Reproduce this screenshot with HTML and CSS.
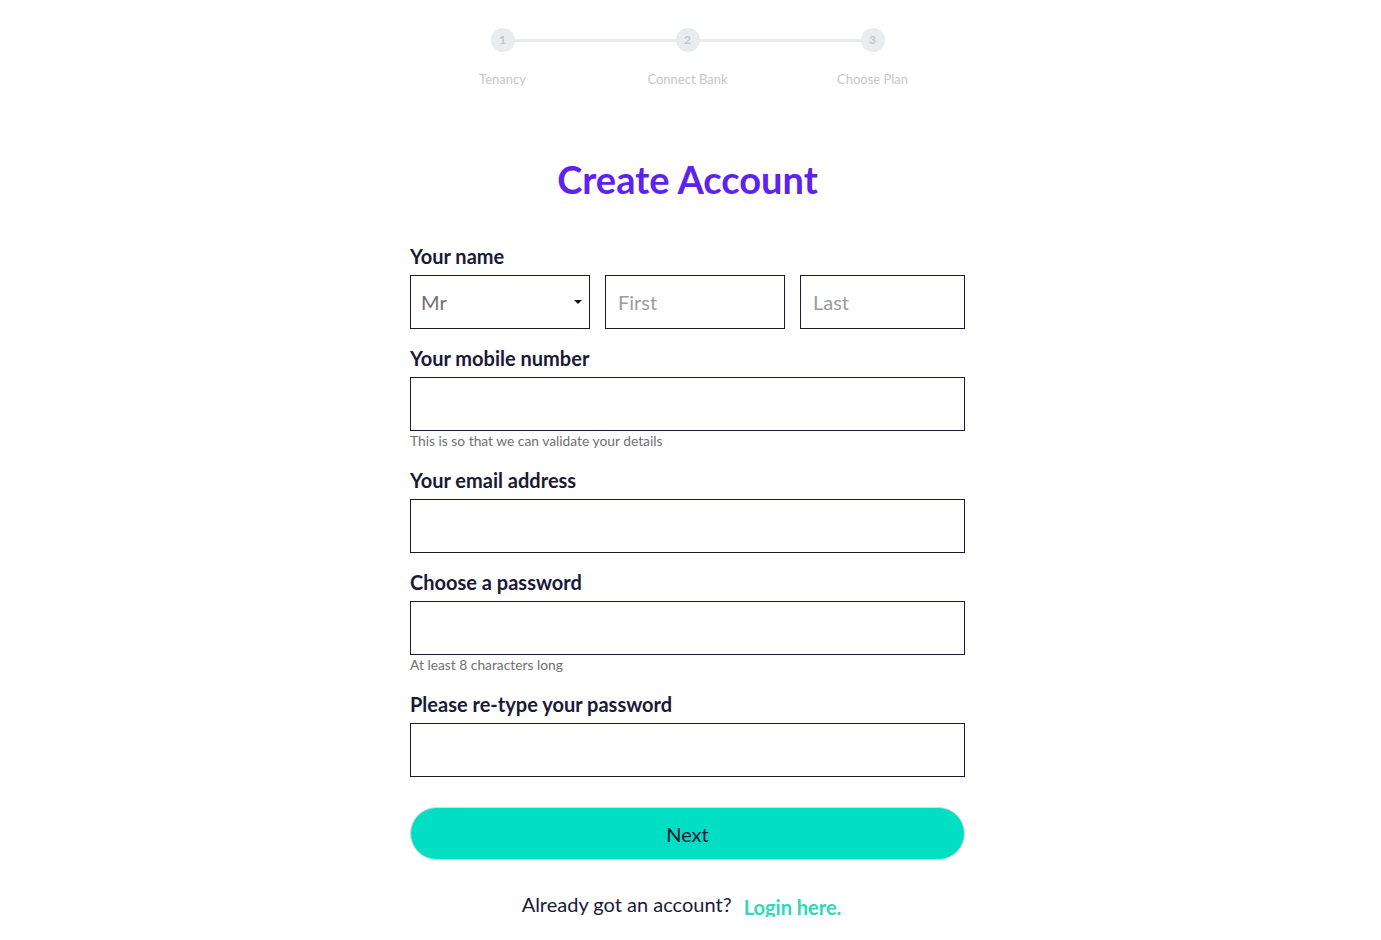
FILE: index.html
```html
<!DOCTYPE html>
<html lang="en">
<head>
<meta charset="utf-8">
<title>Create Account</title>
<link rel="stylesheet" href="styles.css">
</head>
<body>
<div class="page">
  <ol class="stepper">
    <li class="step"><span class="dot">1</span><span class="step-label">Tenancy</span></li>
    <li class="step"><span class="dot">2</span><span class="step-label">Connect Bank</span></li>
    <li class="step"><span class="dot">3</span><span class="step-label">Choose Plan</span></li>
  </ol>

  <h1 class="title">Create Account</h1>

  <form class="form">
    <div class="field">
      <label class="label">Your name</label>
      <div class="name-row">
        <div class="select-wrap">
          <select class="input select">
            <option>Mr</option>
            <option>Mrs</option>
            <option>Ms</option>
          </select>
        </div>
        <input class="input" type="text" placeholder="First">
        <input class="input" type="text" placeholder="Last">
      </div>
    </div>

    <div class="field">
      <label class="label">Your mobile number</label>
      <input class="input" type="tel">
      <p class="help">This is so that we can validate your details</p>
    </div>

    <div class="field">
      <label class="label">Your email address</label>
      <input class="input" type="email">
    </div>

    <div class="field">
      <label class="label">Choose a password</label>
      <input class="input" type="password">
      <p class="help">At least 8 characters long</p>
    </div>

    <div class="field">
      <label class="label">Please re-type your password</label>
      <input class="input" type="password">
    </div>

    <button class="next" type="button">Next</button>

    <p class="login">Already got an account? <a class="login-link" href="#">Login here.</a></p>
  </form>
</div>
</body>
</html>
```

FILE: styles.css
```css
* { box-sizing: border-box; }

html, body {
  margin: 0;
  padding: 0;
  background: #ffffff;
  font-family: "Lato", "Open Sans", "Liberation Sans", sans-serif;
  color: #1a1937;
}

body {
  padding-right: 6px;
}

.page {
  width: 555px;
  margin: 0 auto;
  padding-top: 28px;
}

/* Stepper */
.stepper {
  list-style: none;
  margin: 0;
  padding: 0;
  display: grid;
  grid-template-columns: repeat(3, 1fr);
}

.step {
  position: relative;
  display: flex;
  flex-direction: column;
  align-items: center;
}

.step:not(:first-child)::before {
  content: "";
  position: absolute;
  top: 11px;
  left: -50%;
  right: 50%;
  height: 3px;
  background: #e9ecef;
  z-index: 0;
}

.dot {
  position: relative;
  z-index: 1;
  width: 24px;
  height: 24px;
  border-radius: 50%;
  background: #e9ecef;
  color: #c3c6ca;
  font-size: 12px;
  font-weight: 700;
  line-height: 24px;
  text-align: center;
}

.step-label {
  margin-top: 19px;
  font-size: 13px;
  line-height: 16px;
  color: #c7c7c7;
}

/* Title */
.title {
  margin: 69px 0 0;
  text-align: center;
  font-size: 38px;
  line-height: 46px;
  font-weight: 700;
  color: #5d22ef;
}

/* Form */
.form {
  margin-top: 42px;
}

.field {
  margin-bottom: 17px;
}

.label {
  display: block;
  font-size: 20px;
  line-height: 24px;
  font-weight: 700;
  color: #1a1937;
  margin-bottom: 7px;
}

.name-row {
  display: grid;
  grid-template-columns: 180px 180px 1fr;
  column-gap: 15px;
}

.input {
  display: block;
  width: 100%;
  height: 54px;
  margin: 0;
  border: 1px solid #1b1a3c;
  border-radius: 0;
  background: #ffffff;
  padding: 0 12px;
  font-family: inherit;
  font-size: 20px;
  color: #1a1937;
  outline: none;
}

.input::placeholder {
  color: #9b9b9b;
}

.select-wrap {
  position: relative;
}

.select {
  -webkit-appearance: none;
  appearance: none;
  color: #707070;
  padding-left: 10px;
}

.select-wrap::after {
  content: "";
  position: absolute;
  right: 8px;
  top: 25px;
  width: 0;
  height: 0;
  border-left: 4px solid transparent;
  border-right: 4px solid transparent;
  border-top: 4px solid #111111;
  pointer-events: none;
}

.help {
  margin: 2px 0 0;
  font-size: 13.8px;
  line-height: 16px;
  color: #6f6f6f;
}

.field:has(.help) {
  margin-bottom: 19px;
}

.next {
  display: block;
  width: 100%;
  height: 53px;
  margin-top: 30px;
  border: 1px solid #d9d9d9;
  border-radius: 27px;
  background: #00dfc4;
  font-family: inherit;
  font-size: 20px;
  color: #1a1937;
  cursor: pointer;
}

.login {
  margin: 31px 12px 0 0;
  text-align: center;
  font-size: 20px;
  line-height: 26px;
  color: #1a1937;
}

.login-link {
  margin-left: 7px;
  position: relative;
  top: 3px;
  font-weight: 700;
  color: #2fd8b8;
  text-decoration: none;
}
```
